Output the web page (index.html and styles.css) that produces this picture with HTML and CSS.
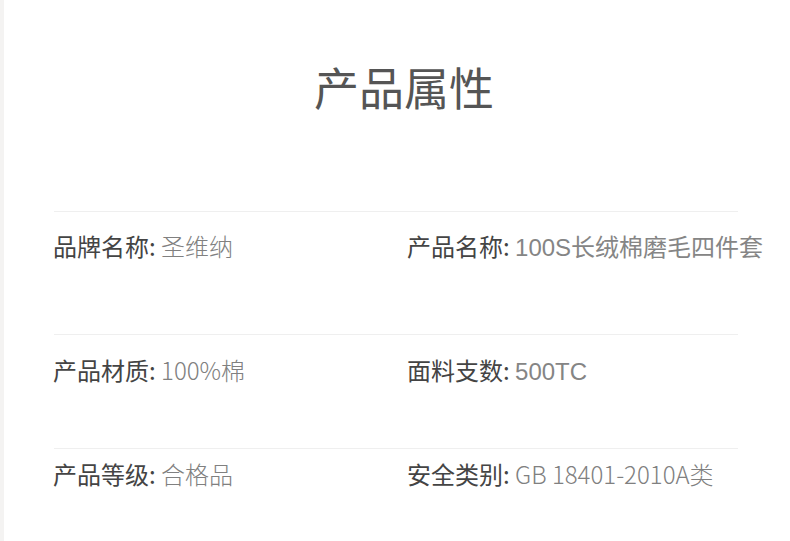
FILE: index.html
```html
<!DOCTYPE html>
<html lang="zh-CN">
<head>
<meta charset="utf-8">
<link rel="stylesheet" href="styles.css">
</head>
<body>
<div class="page">
  <h1 class="title">产品属性</h1>
  <div class="table">
    <div class="row row-1">
      <div class="cell"><span class="label">品牌名称:</span> <span class="value">圣维纳</span></div>
      <div class="cell"><span class="label">产品名称:</span> <span class="value value-latin">100S长绒棉磨毛四件套</span></div>
    </div>
    <div class="row row-2">
      <div class="cell"><span class="label">产品材质:</span> <span class="value">100%棉</span></div>
      <div class="cell"><span class="label">面料支数:</span> <span class="value value-latin">500TC</span></div>
    </div>
    <div class="row row-3">
      <div class="cell"><span class="label">产品等级:</span> <span class="value">合格品</span></div>
      <div class="cell"><span class="label">安全类别:</span> <span class="value">GB 18401-2010A类</span></div>
    </div>
  </div>
</div>
</body>
</html>
```
FILE: styles.css
```css
html, body {
  margin: 0;
  padding: 0;
  background: #ffffff;
}
body {
  font-family: "Noto Sans CJK SC", "Noto Sans", sans-serif;
  width: 790px;
  height: 541px;
  overflow: hidden;
}
.page {
  border-left: 4px solid #f4f3f2;
  height: 541px;
  box-sizing: border-box;
  padding-top: 65px;
}
.title {
  margin: 0;
  padding-left: 14px;
  text-align: center;
  font-size: 45px;
  line-height: 44px;
  font-weight: 400;
  color: #555555;
}
.table {
  margin: 102px 0 0 50px;
  width: 684px;
}
.row {
  display: grid;
  grid-template-columns: 354px 1fr;
  border-top: 1px solid #efefef;
  font-size: 24px;
  line-height: 30px;
}
.row-1 { padding-top: 19px; height: 103px; }
.row-2 { padding-top: 20px; height: 93px; }
.row-3 { padding-top: 10px; }
.cell {
  white-space: nowrap;
  margin-left: -1px;
}
.label {
  color: #444444;
}
.value {
  color: #808080;
  font-weight: 300;
}
.value-latin {
  font-family: "Liberation Sans", "Noto Sans CJK SC", sans-serif;
  font-weight: 400;
  color: #858585;
}
```
